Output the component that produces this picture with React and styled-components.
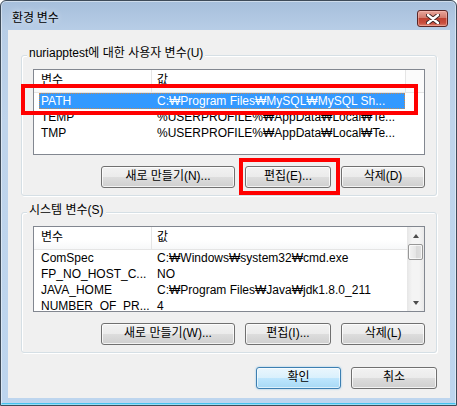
// Dependencies
import styled, { createGlobalStyle, css } from "styled-components"

// ------------------------------
// Data
// ------------------------------
const userVars = [
  { name: "PATH", value: "C:₩Program Files₩MySQL₩MySQL Sh...", selected: true },
  { name: "TEMP", value: "%USERPROFILE%₩AppData₩Local₩Te..." },
  { name: "TMP", value: "%USERPROFILE%₩AppData₩Local₩Te..." },
]

const systemVars = [
  { name: "ComSpec", value: "C:₩Windows₩system32₩cmd.exe" },
  { name: "FP_NO_HOST_C...", value: "NO" },
  { name: "JAVA_HOME", value: "C:₩Program Files₩Java₩jdk1.8.0_211" },
  { name: "NUMBER_OF_PR...", value: "4" },
]

// ------------------------------
// The dialog
// ------------------------------
export default function App() {
  return (
    <>
      <GlobalStyle />
      <Window>
        <TitleBar>
          <Title>환경 변수</Title>
          <CloseButton aria-label="닫기">
            <svg width="14" height="10" viewBox="0 0 14 10">
              <path
                d="M2 1 L12 9 M12 1 L2 9"
                stroke="#3a2020"
                strokeWidth="4.2"
                strokeLinecap="round"
              />
              <path
                d="M2 1 L12 9 M12 1 L2 9"
                stroke="#ffffff"
                strokeWidth="2.4"
                strokeLinecap="round"
              />
            </svg>
          </CloseButton>
        </TitleBar>

        <Client>
          <GroupBox>
            <Caption>nuriapptest에 대한 사용자 변수(U)</Caption>
            <ListView>
              <ListBody>
                <Header>
                  <HeaderCell $width={118} $pad={7}>변수</HeaderCell>
                  <HeaderCell $width={254} $pad={5}>값</HeaderCell>
                  <HeaderFill />
                </Header>
                {userVars.map((v) => (
                  <Row key={v.name} $selected={v.selected}>
                    <NameCell>{v.name}</NameCell>
                    <ValueCell>{v.value}</ValueCell>
                  </Row>
                ))}
              </ListBody>
            </ListView>
            <ButtonRow>
              <Button $width={134}>새로 만들기(N)...</Button>
              <Button $width={86}>편집(E)...</Button>
              <Button $width={84}>삭제(D)</Button>
            </ButtonRow>
            {/* red annotation boxes drawn over the screenshot */}
            <Mark $left={-1} $top={28} $width={397} $height={31} />
            <Mark $left={217} $top={102} $width={101} $height={37} />
          </GroupBox>

          <GroupBox $gap={16}>
            <Caption>시스템 변수(S)</Caption>
            <ListView>
              <ListBody>
                <Header>
                  <HeaderCell $width={118} $pad={7}>변수</HeaderCell>
                  <HeaderCell $width={254} $pad={5} $last>값</HeaderCell>
                </Header>
                {systemVars.map((v) => (
                  <Row key={v.name}>
                    <NameCell>{v.name}</NameCell>
                    <ValueCell>{v.value}</ValueCell>
                  </Row>
                ))}
              </ListBody>
              <ScrollBar>
                <Arrow $dir="up" />
                <Thumb />
                <Track />
                <Arrow $dir="down" />
              </ScrollBar>
            </ListView>
            <ButtonRow>
              <Button $width={134}>새로 만들기(W)...</Button>
              <Button $width={86}>편집(I)...</Button>
              <Button $width={84}>삭제(L)</Button>
            </ButtonRow>
          </GroupBox>

          <Footer>
            <Button $width={85} $default>확인</Button>
            <Button $width={86}>취소</Button>
          </Footer>
        </Client>
      </Window>
    </>
  )
}

// ------------------------------
// Styles
// ------------------------------
const GlobalStyle = createGlobalStyle`
  * { box-sizing: border-box; }
  body {
    margin: 0;
    background: #ffffff;
    font-family: "Liberation Sans", "Noto Sans CJK KR", sans-serif;
    font-size: 12px;
    color: #000;
  }
`

// Aero window frame
const Window = styled.div`
  width: 457px;
  height: 406px;
  border: 1px solid #3e4b59;
  border-radius: 6px 6px 0 0;
  background: linear-gradient(to bottom, #a6bfdb 0px, #b7cde6 28px, #bfd4eb 120px, #bdd5ee 100%);
  box-shadow: inset 0 0 0 1px rgba(255, 255, 255, 0.45), inset 0 -2px 0 #45c3ee;
  padding: 0 6px 7px 7px;
  display: flex;
  flex-direction: column;
`

const TitleBar = styled.div`
  height: 29px;
  display: flex;
  align-items: flex-start;
  justify-content: space-between;
  padding: 9px 2px 0 4px;
`

const Title = styled.span`
  font-family: "Noto Sans CJK KR", sans-serif;
  font-size: 12px;
  line-height: 14px;
  color: #000;
  text-shadow: 0 0 6px rgba(255, 255, 255, 0.9);
`

const CloseButton = styled.div`
  width: 31px;
  height: 17px;
  border: 1px solid #5a2626;
  border-radius: 3px;
  background: linear-gradient(to bottom, #e8a69c 0%, #d27a6d 45%, #c04232 50%, #c94e3e 80%, #d9806e 100%);
  box-shadow: inset 0 0 0 1px rgba(255, 200, 190, 0.45);
  display: grid;
  place-items: center;
`

// Grey client area
const Client = styled.div`
  flex: 1;
  background: #f0f0f0;
  padding: 25px 13px 0 13px;
  display: flex;
  flex-direction: column;
`

const GroupBox = styled.div`
  position: relative;
  margin-top: ${(p) => p.$gap || 0}px;
  border: 1px solid #d5dfe5;
  border-radius: 3px;
  box-shadow: inset 1px 1px 0 #ffffff, 1px 1px 0 #ffffff;
  padding: 13px 11px 7px 11px;
`

const Caption = styled.span`
  position: absolute;
  left: 5px;
  top: -10px;
  padding: 0 2px;
  background: #f0f0f0;
  line-height: 14px;
  white-space: nowrap;
`

const ListView = styled.div`
  width: 392px;
  height: 86px;
  border: 1px solid #828790;
  background: #ffffff;
  overflow: hidden;
  display: flex;
`

const ListBody = styled.div`
  flex: 1;
  min-width: 0;
`

const Header = styled.div`
  height: 23px;
  display: flex;
  border-bottom: 1px solid #e5e5e5;
  background: linear-gradient(to bottom, #ffffff, #ffffff 60%, #f7f8f9);
`

const HeaderCell = styled.div`
  width: ${(p) => p.$width}px;
  flex: none;
  padding-left: ${(p) => p.$pad}px;
  line-height: 21px;
  border-right: ${(p) => (p.$last ? "none" : "1px solid #e5e5e5")};
`

const HeaderFill = styled.div`
  flex: 1;
  background: #fbfbfb;
`

const Row = styled.div`
  width: 366px;
  height: 16px;
  margin-left: 5px;
  display: flex;
  line-height: 16px;
  white-space: nowrap;
  ${(p) =>
    p.$selected &&
    css`
      background: #3399ff;
      color: #ffffff;
      outline: 1px dotted #c98a4e;
      outline-offset: -1px;
    `}
`

const NameCell = styled.div`
  width: 112px;
  flex: none;
  padding-left: 2px;
  overflow: hidden;
`

const ValueCell = styled.div`
  flex: 1;
  padding-left: 6px;
  overflow: hidden;
`

// Vertical scroll bar of the system list
const ScrollBar = styled.div`
  width: 17px;
  flex: none;
  display: flex;
  flex-direction: column;
  background: linear-gradient(to right, #e6e6e6, #f4f4f4 30%, #f4f4f4 70%, #e9e9e9);
`

const Arrow = styled.div`
  height: 17px;
  display: grid;
  place-items: center;
  &::after {
    content: "";
    width: 0;
    height: 0;
    border-left: 3.5px solid transparent;
    border-right: 3.5px solid transparent;
    ${(p) =>
      p.$dir === "up"
        ? css`border-bottom: 4px solid #4d4d4d;`
        : css`border-top: 4px solid #4d4d4d;`}
  }
`

const Thumb = styled.div`
  height: 16px;
  margin: 0 1px;
  border: 1px solid #979797;
  border-radius: 2px;
  background: linear-gradient(to right, #f3f3f3, #e6e6e6 50%, #d9d9d9 51%, #e0e0e0);
  box-shadow: inset 0 0 0 1px rgba(255, 255, 255, 0.7);
`

const Track = styled.div`
  flex: 1;
`

const ButtonRow = styled.div`
  display: flex;
  justify-content: flex-end;
  gap: 10px;
  margin-top: 11px;
`

const Footer = styled.div`
  display: flex;
  justify-content: flex-end;
  gap: 10px;
  margin-top: 14px;
`

// Win7 push button
const Button = styled.div`
  width: ${(p) => p.$width}px;
  height: 22px;
  border: 1px solid #707070;
  border-radius: 3px;
  background: linear-gradient(to bottom, #f2f2f2 0%, #ebebeb 50%, #dddddd 51%, #cfcfcf 100%);
  box-shadow: inset 0 0 0 1px rgba(255, 255, 255, 0.75);
  text-align: center;
  line-height: 19px;
  white-space: nowrap;
  ${(p) =>
    p.$default &&
    css`
      border-color: #3c7fb1;
      background: linear-gradient(to bottom, #eaf6fd 0%, #d9f0fc 50%, #bee6fd 51%, #a7d9f5 100%);
      box-shadow: inset 0 0 0 1px rgba(255, 255, 255, 0.6), 0 0 2px rgba(60, 160, 230, 0.6);
    `}
`

// Red annotation rectangle over the dialog
const Mark = styled.div`
  position: absolute;
  left: ${(p) => p.$left}px;
  top: ${(p) => p.$top}px;
  width: ${(p) => p.$width}px;
  height: ${(p) => p.$height}px;
  border: 4px solid #ff0000;
  pointer-events: none;
`
